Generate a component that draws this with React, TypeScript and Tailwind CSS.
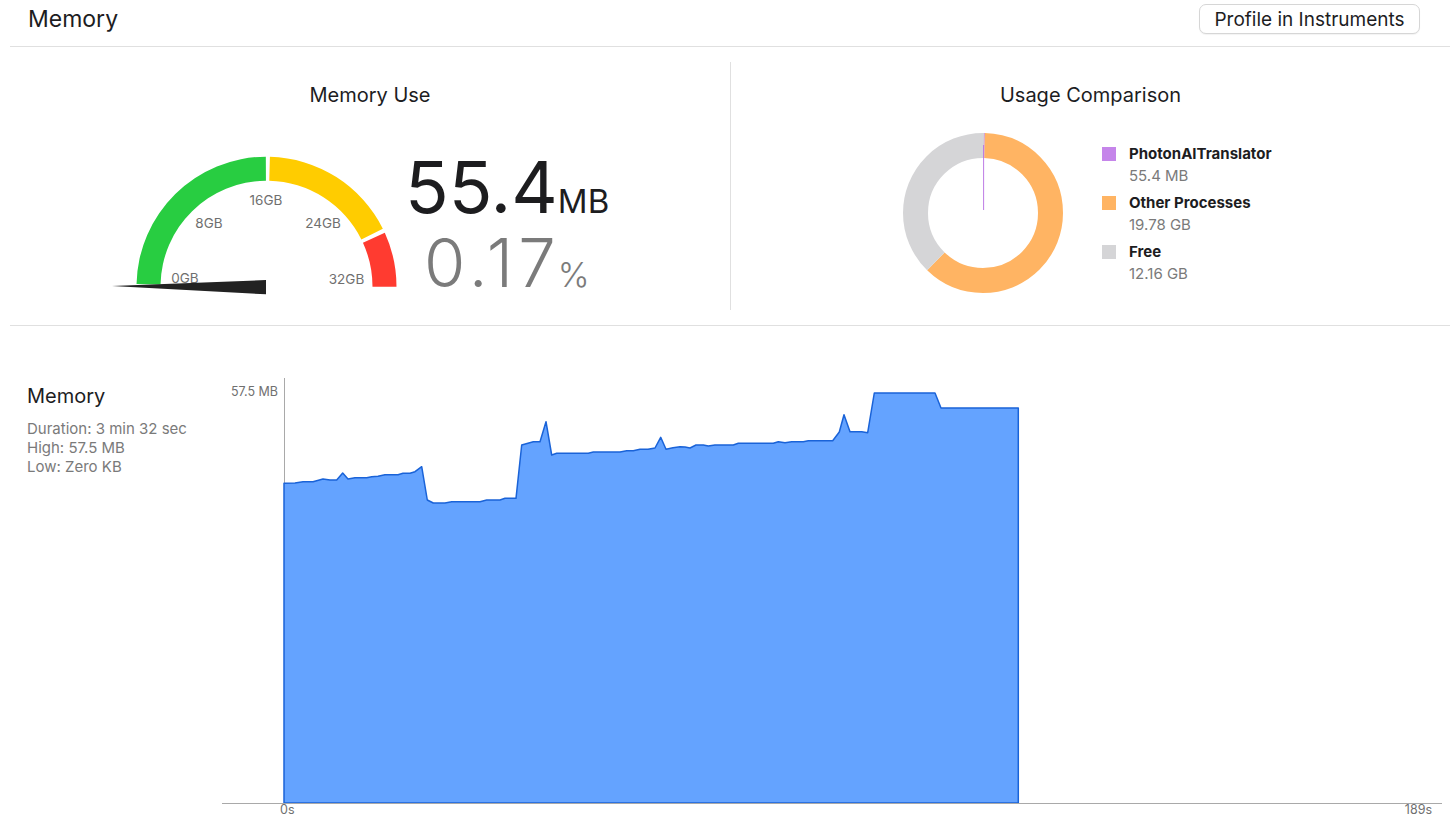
import React from "react"

// gauge geometry (svg coords)
const CX = 161.5
const CY = 134.7
const R_OUT = 130
const R_IN = 106

const gaugeSegments = [
    { from: 178.8, to: 90.3, color: "#28cd41" },
    { from: 88.5, to: 26.5, color: "#ffcc00" },
    { from: 24.5, to: 0, color: "#ff3b30" },
]

const gaugeLabels = [
    { text: "0GB", x: 80, y: 131 },
    { text: "8GB", x: 104, y: 76 },
    { text: "16GB", x: 161, y: 53 },
    { text: "24GB", x: 218, y: 76 },
    { text: "32GB", x: 241.5, y: 132 },
]

const pt = (r: number, deg: number) => {
    const a = (deg * Math.PI) / 180
    return `${(CX + r * Math.cos(a)).toFixed(2)} ${(CY - r * Math.sin(a)).toFixed(2)}`
}

const sector = (from: number, to: number) =>
    `M ${pt(R_OUT, from)} A ${R_OUT} ${R_OUT} 0 0 1 ${pt(R_OUT, to)} L ${pt(R_IN, to)} A ${R_IN} ${R_IN} 0 0 0 ${pt(R_IN, from)} Z`

const Gauge = () => (
    <svg width="300" height="146" viewBox="0 0 300 146" className="mt-[1px] shrink-0">
        {gaugeSegments.map((s) => (
            <path key={s.color} d={sector(s.from, s.to)} fill={s.color} />
        ))}
        {gaugeLabels.map((l) => (
            <text key={l.text} x={l.x} y={l.y} textAnchor="middle" fontSize="13.5" fill="#6f6f6f">
                {l.text}
            </text>
        ))}
        <polygon points="7,134 161,128 161,142.3" fill="#222222" />
    </svg>
)

const usage = [
    { name: "PhotonAITranslator", value: "55.4 MB", gb: 0.0554, color: "#c585ea" },
    { name: "Other Processes", value: "19.78 GB", gb: 19.78, color: "#ffb463" },
    { name: "Free", value: "12.16 GB", gb: 12.16, color: "#d5d5d7" },
]

const Donut = () => {
    const r = 67.5
    const circ = 2 * Math.PI * r
    const total = usage.reduce((a, u) => a + u.gb, 0)
    let offset = 0
    return (
        <svg width="162" height="162" viewBox="0 0 162 162" className="shrink-0">
            <g transform="rotate(-90 81 81)">
                {usage.map((u) => {
                    const len = Math.max((u.gb / total) * circ, 1.6)
                    const el = (
                        <circle
                            key={u.name}
                            cx="81"
                            cy="81"
                            r={r}
                            fill="none"
                            stroke={u.color}
                            strokeWidth="25"
                            strokeDasharray={`${len} ${circ - len}`}
                            strokeDashoffset={-offset}
                        />
                    )
                    offset += len
                    return el
                })}
            </g>
            <line x1="81.6" y1="13" x2="81.6" y2="78" stroke="#b86fe3" strokeWidth="1" opacity="0.9" />
        </svg>
    )
}

// memory samples, chart coords (y-axis at x=62, x-axis at y=425)
const samples: [number, number][] = [
    [62, 105.3], [73, 105], [81, 103.7], [91, 103.7], [101, 101], [108, 102], [114.7, 102],
    [120.7, 95], [126, 101], [133, 99.7], [144.7, 99.7], [149.7, 98.7], [156, 98.3], [163, 96.7],
    [176, 96.7], [181, 95.3], [188, 95.3], [193, 93.7], [199.7, 88.7], [205.3, 122], [211.3, 125],
    [223, 125], [229.7, 123.7], [258, 123.7], [264.7, 122], [278, 122], [283, 120.3], [294, 120.3],
    [299.7, 67], [311.3, 63.7], [318, 63.7], [324, 43.7], [329.7, 77], [334.7, 75.3], [366.3, 75.3],
    [371.3, 74], [398, 74], [404.7, 72.7], [411.3, 72.7], [418, 71.3], [426, 71.3], [433, 70],
    [438.7, 59.3], [444, 71.3], [451, 69.7], [458, 68.7], [463, 69], [468, 70], [474, 67],
    [481.3, 67], [486.3, 68], [493, 67], [511.3, 67], [516.3, 65.3], [551.3, 65.3], [556.3, 63.7],
    [563, 64.7], [569.7, 63.7], [581.3, 63.7], [586.3, 62.7], [610.7, 62.7], [617.3, 54],
    [622, 36.7], [628, 53.7], [639.7, 53.7], [645.7, 54.7], [652.3, 15], [713, 15], [719, 30],
    [796.3, 30],
]

const MemoryChart = () => {
    const area = [...samples, [796.3, 425], [62, 425]].map((p) => p.join(",")).join(" ")
    return (
        <svg width="1220" height="445" viewBox="0 0 1220 445" className="shrink-0">
            <line x1="62.5" y1="0" x2="62.5" y2="425" stroke="#a9a9a9" strokeWidth="1" />
            <polygon points={area} fill="#64a3ff" stroke="#1a63d8" strokeWidth="1.5" strokeLinejoin="round" />
            <line x1="0" y1="425.5" x2="1220" y2="425.5" stroke="#a9a9a9" strokeWidth="1" />
            <text x="56" y="18" textAnchor="end" fontSize="12.5" fill="#707070">57.5 MB</text>
            <text x="58" y="435.5" fontSize="12.5" fill="#707070">0s</text>
            <text x="1210" y="435.5" textAnchor="end" fontSize="12.5" fill="#707070">189s</text>
        </svg>
    )
}

export default function App() {
    return (
        <div className="min-h-screen bg-white pl-[10px] pr-[6px] font-['Inter','Liberation_Sans',Arial,sans-serif] text-[#1d1d1f]">
            <header className="flex h-[47px] items-start justify-between border-b border-[#e0e0e0]">
                <h1 className="pl-[18px] pt-[5px] text-[23px] leading-[28px]">Memory</h1>
                <button className="mr-[30px] mt-[4px] h-[30px] w-[221px] rounded-[7px] border border-[#d6d6d6] bg-white text-[19px] leading-none shadow-[0_1px_1px_rgba(0,0,0,0.05)]">
                    Profile in Instruments
                </button>
            </header>

            <section className="flex h-[279px] border-b border-[#e0e0e0]">
                <div className="flex w-[720px] flex-col">
                    <h2 className="pt-[34px] text-center text-[20px] leading-[28px]">Memory Use</h2>
                    <div className="mt-[42px] flex pl-[95px]">
                        <Gauge />
                        <div className="flex flex-col">
                            <div className="flex items-baseline">
                                <span className="text-[72px] leading-none">55.4</span>
                                <span className="text-[33px] leading-none">MB</span>
                            </div>
                            <div className="ml-[19px] mt-[6px] flex items-baseline text-[#7b7b7b]">
                                <span className="text-[67px] font-light leading-none tracking-[5px]">0.17</span>
                                <span className="ml-[-3px] text-[34px] font-light leading-none">%</span>
                            </div>
                        </div>
                    </div>
                </div>

                <div className="my-[15px] w-px bg-[#e0e0e0]" />

                <div className="flex flex-1 flex-col">
                    <h2 className="pt-[34px] text-center text-[20px] leading-[28px]">Usage Comparison</h2>
                    <div className="mt-[23px] flex pl-[171px]">
                        <Donut />
                        <div className="ml-[38px] mt-[11px] flex flex-col gap-[5px]">
                            {usage.map((u) => (
                                <div key={u.name} className="flex items-start">
                                    <div className="mt-[4px] h-[14px] w-[14px]" style={{ backgroundColor: u.color }} />
                                    <div className="ml-[13px]">
                                        <div className="text-[15px] font-bold leading-[22px]">{u.name}</div>
                                        <div className="text-[15px] leading-[22px] text-[#7a7a7a]">{u.value}</div>
                                    </div>
                                </div>
                            ))}
                        </div>
                    </div>
                </div>
            </section>

            <section className="flex pt-[52px]">
                <div className="w-[212px] shrink-0 pl-[17px] pt-[4px]">
                    <h3 className="text-[20px] leading-[28px]">Memory</h3>
                    <div className="mt-[9px] text-[15px] leading-[19px] text-[#7a7a7a]">
                        <p>Duration: 3 min 32 sec</p>
                        <p>High: 57.5 MB</p>
                        <p>Low: Zero KB</p>
                    </div>
                </div>
                <MemoryChart />
            </section>
        </div>
    )
}
